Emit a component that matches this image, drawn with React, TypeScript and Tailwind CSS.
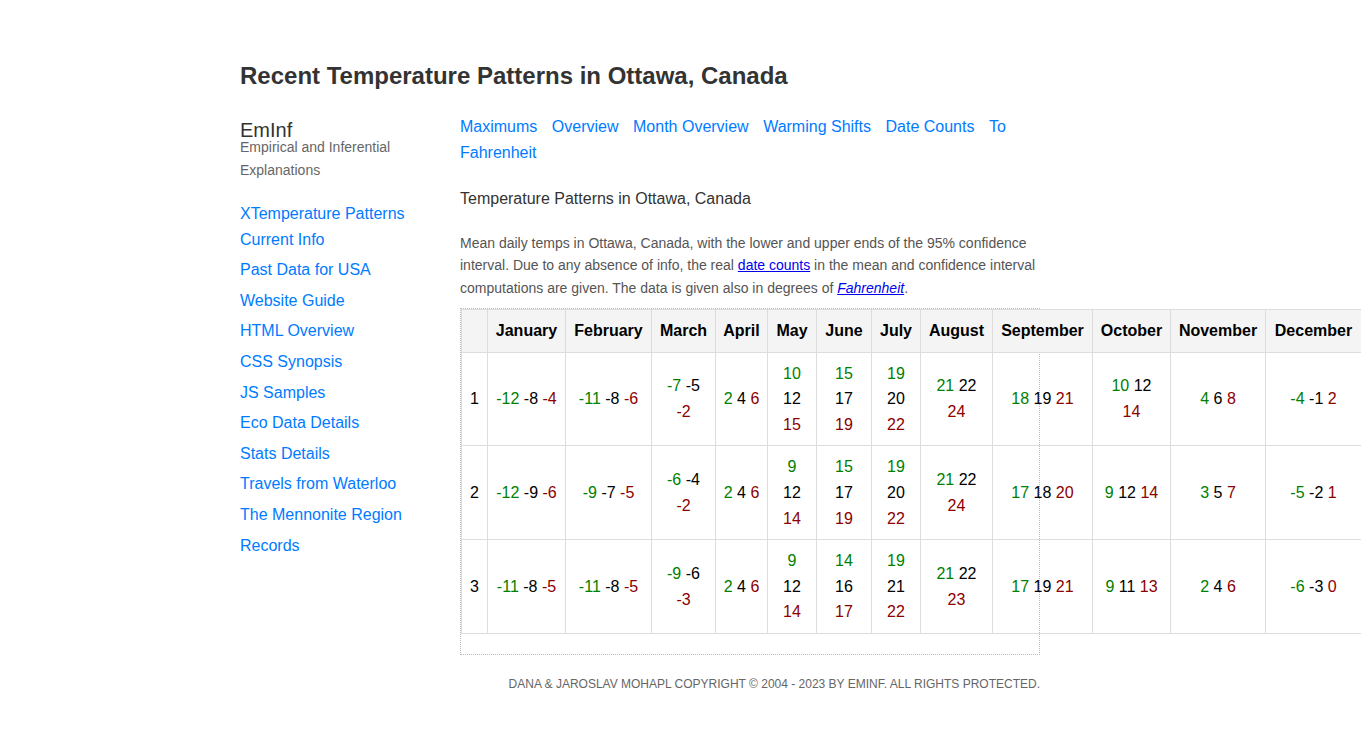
import React from "react";

const G = "text-[#008000]";
const K = "text-[#000000]";
const R = "text-[#8b0000]";

type Tok = [string, number];
type Row = { day: string; cells: Tok[][][] };

const one = (a: string, b: string, c: string): Tok[][] => [[[a, 0], [b, 1], [c, 2]]];
const two = (a: string, b: string, c: string): Tok[][] => [[[a, 0], [b, 1]], [[c, 2]]];
const three = (a: string, b: string, c: string): Tok[][] => [[[a, 0]], [[b, 1]], [[c, 2]]];

const rows: Row[] = [
  {
    day: "1",
    cells: [
      one("-12", "-8", "-4"),
      one("-11", "-8", "-6"),
      two("-7", "-5", "-2"),
      one("2", "4", "6"),
      three("10", "12", "15"),
      three("15", "17", "19"),
      three("19", "20", "22"),
      two("21", "22", "24"),
      one("18", "19", "21"),
      two("10", "12", "14"),
      one("4", "6", "8"),
      one("-4", "-1", "2"),
    ],
  },
  {
    day: "2",
    cells: [
      one("-12", "-9", "-6"),
      one("-9", "-7", "-5"),
      two("-6", "-4", "-2"),
      one("2", "4", "6"),
      three("9", "12", "14"),
      three("15", "17", "19"),
      three("19", "20", "22"),
      two("21", "22", "24"),
      one("17", "18", "20"),
      one("9", "12", "14"),
      one("3", "5", "7"),
      one("-5", "-2", "1"),
    ],
  },
  {
    day: "3",
    cells: [
      one("-11", "-8", "-5"),
      one("-11", "-8", "-5"),
      two("-9", "-6", "-3"),
      one("2", "4", "6"),
      three("9", "12", "14"),
      three("14", "16", "17"),
      three("19", "21", "22"),
      two("21", "22", "23"),
      one("17", "19", "21"),
      one("9", "11", "13"),
      one("2", "4", "6"),
      one("-6", "-3", "0"),
    ],
  },
];

const months = [
  "January",
  "February",
  "March",
  "April",
  "May",
  "June",
  "July",
  "August",
  "September",
  "October",
  "November",
  "December",
];

const widths = [26, 78, 86, 64, 52, 49, 55, 49, 72, 100, 78, 95, 96];

const colors = [G, K, R];

const sideLinks = [
  "Past Data for USA",
  "Website Guide",
  "HTML Overview",
  "CSS Synopsis",
  "JS Samples",
  "Eco Data Details",
  "Stats Details",
  "Travels from Waterloo",
  "The Mennonite Region",
  "Records",
];

const navLinks = ["Maximums", "Overview", "Month Overview", "Warming Shifts", "Date Counts", "To", "Fahrenheit"];

export default function App() {
  return (
    <div
      className="min-h-[735px] bg-white text-[#333333]"
      style={{ fontFamily: '"Liberation Sans", Arial, Helvetica, sans-serif' }}
    >
      <div className="ml-[240px] w-[800px] pt-[61px]">
        <h1 className="text-[24px] font-bold leading-[29px] text-[#333333]">
          Recent Temperature Patterns in Ottawa, Canada
        </h1>

        <div className="mt-[24px] flex gap-[20px]">
          {/* Sidebar */}
          <aside className="w-[200px] shrink-0 pt-[6px]">
            <div className="text-[20px] leading-[20px] text-[#333333]">EmInf</div>
            <div className="-mt-[4.5px] text-[14px] leading-[23px] text-[#666666]">
              Empirical and Inferential Explanations
            </div>
            <nav className="mt-[19.5px] flex flex-col text-[16px] leading-[26px] text-[#007bff]">
              <a className="cursor-pointer">XTemperature Patterns</a>
              <a className="cursor-pointer">Current Info</a>
              {sideLinks.map((l, i) => (
                <a key={l} className={i === 0 ? "mt-[4px] cursor-pointer" : "mt-[4.65px] cursor-pointer"}>
                  {l}
                </a>
              ))}
            </nav>
          </aside>

          {/* Main */}
          <main className="w-[580px] shrink-0">
            <div className="flex flex-wrap gap-x-[14.5px] text-[16px] leading-[26px] text-[#007bff]">
              {navLinks.map((l) => (
                <a key={l} className="cursor-pointer">
                  {l}
                </a>
              ))}
            </div>

            <h2 className="mt-[20px] text-[16px] font-normal leading-[26px] text-[#333333]">
              Temperature Patterns in Ottawa, Canada
            </h2>

            <p className="mt-[19.75px] text-[14px] leading-[22.4px] text-[#555555]">
              Mean daily temps in Ottawa, Canada, with the lower and upper ends of the 95% confidence interval. Due to
              any absence of info, the real{" "}
              <a className="cursor-pointer text-[#0000ee] underline">date counts</a> in the mean and confidence
              interval computations are given. The data is given also in degrees of{" "}
              <a className="cursor-pointer italic text-[#0000ee] underline">Fahrenheit</a>.
            </p>

            <div className="mt-[9px] border border-dotted border-[#bbbbbb] pb-[20px]">
              <table className="w-[900px] table-fixed border-collapse text-[16px] leading-[25.6px] text-[#000000]">
                <colgroup>
                  {widths.map((w, i) => (
                    <col key={i} style={{ width: w }} />
                  ))}
                </colgroup>
                <thead>
                  <tr className="bg-[#f4f4f4]">
                    <th className="border border-[#dddddd] px-0 py-[8px]"></th>
                    {months.map((m) => (
                      <th
                        key={m}
                        className="whitespace-nowrap border border-[#dddddd] px-0 py-[8px] text-center font-bold"
                      >
                        {m}
                      </th>
                    ))}
                  </tr>
                </thead>
                <tbody>
                  {rows.map((r) => (
                    <tr key={r.day}>
                      <td className="border border-[#dddddd] px-0 py-[8px] text-center align-middle">{r.day}</td>
                      {r.cells.map((cell, ci) => (
                        <td
                          key={ci}
                          className="border border-[#dddddd] px-0 py-[8px] text-center align-middle"
                        >
                          {cell.map((line, li) => (
                            <div key={li} className="whitespace-nowrap">
                              {line.map(([v, c], ti) => (
                                <React.Fragment key={ti}>
                                  {ti > 0 ? " " : ""}
                                  <span className={colors[c]}>{v}</span>
                                </React.Fragment>
                              ))}
                            </div>
                          ))}
                        </td>
                      ))}
                    </tr>
                  ))}
                </tbody>
              </table>
            </div>
          </main>
        </div>

        <footer className="mt-[20px] text-right text-[12px] uppercase leading-[18px] text-[#666666]">
          Dana &amp; Jaroslav Mohapl Copyright © 2004 - 2023 by EmInf. All rights protected.
        </footer>
      </div>
    </div>
  );
}
